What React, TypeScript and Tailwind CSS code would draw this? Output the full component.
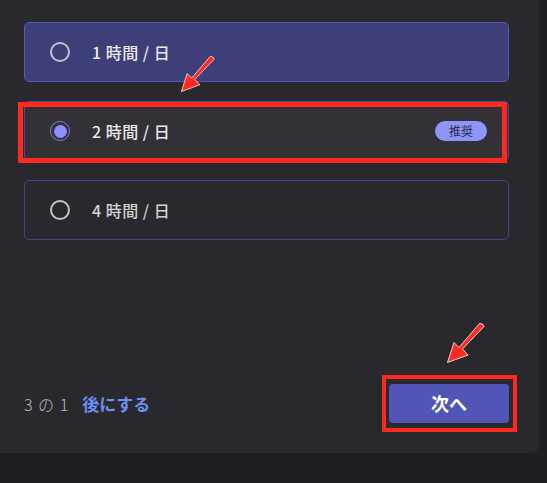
import { useState } from "react";

const options = [
  { id: 1, label: "1 時間 / 日" },
  { id: 2, label: "2 時間 / 日", badge: "推奨" },
  { id: 4, label: "4 時間 / 日" },
];

// red annotation arrow, tip at bottom-left
const Arrow = ({ className }: { className: string }) => (
  <svg viewBox="0 0 40 42" className={className}>
    <path
      d="M33.5 1.5 Q37 1 38 4.5 L16.5 27 L22 33 L1.5 40.5 L8 20.5 L13 25.5 Z"
      fill="#ff2a1f"
      stroke="#fff"
      strokeWidth="0.8"
      strokeLinejoin="round"
    />
  </svg>
);

const App = () => {
  const [selected, setSelected] = useState(2);
  return (
    <div
      className="relative w-[547px] h-[483px] bg-[#1f1e22] overflow-hidden"
      style={{ fontFamily: '"Noto Sans CJK JP", "Noto Sans", sans-serif' }}
    >
      <div className="w-[539px] h-[453px] bg-[#29282c] rounded-br-lg flex flex-col pl-6 pr-[30px] pt-[22px] pb-[30px]">
        <div className="flex flex-col gap-[19px]">
          {options.map((o, i) => {
            const isSel = selected === o.id;
            return (
              <div
                key={o.id}
                onClick={() => setSelected(o.id)}
                className={
                  "h-[60px] rounded-[5px] border flex items-center pl-[25px] pr-[21px] cursor-pointer " +
                  (i === 0
                    ? "bg-[#3e3e78] border-[#5559b0]"
                    : isSel
                    ? "bg-[#333036] border-[#4a4c9c]"
                    : "bg-transparent border-[#40418f]")
                }
              >
                {isSel ? (
                  <span className="w-[20px] h-[20px] rounded-full border-[1.5px] border-[#7d82ea] flex items-center justify-center">
                    <span className="w-[13px] h-[13px] rounded-full bg-[#8a90ff]" />
                  </span>
                ) : (
                  <span className="w-[20px] h-[20px] rounded-full border-2 border-[#c4c4c4]" />
                )}
                <span
                  className={
                    "ml-[22px] text-[16px] font-medium tracking-[0.5px] " +
                    (i === 2 ? "text-[#d2d2d2]" : "text-[#ececec]")
                  }
                >
                  {o.label}
                </span>
                {o.badge && (
                  <span className="ml-auto h-[20px] px-[14px] rounded-full bg-[#8e95f8] text-[#2b2a3e] text-[12px] leading-[20px]">
                    {o.badge}
                  </span>
                )}
              </div>
            );
          })}
        </div>

        <div className="mt-auto flex items-center justify-between">
          <div className="flex items-center gap-[13px]">
            <span className="text-[#bcbcbc] text-[16px] font-light tracking-[1px]">3 の 1</span>
            <span className="text-[#6b8ef0] text-[17px] font-bold">後にする</span>
          </div>
          <button className="w-[120px] h-[39px] rounded-[4px] bg-[#5155b5] text-white text-[18px] font-bold">
            次へ
          </button>
        </div>
      </div>

      {/* annotation overlays */}
      <div className="absolute left-[18px] top-[102px] w-[489px] h-[61px] border-[5px] border-[#ff2a1f]" />
      <div className="absolute left-[382px] top-[375px] w-[135px] h-[57px] border-[4px] border-[#ff2a1f]" />
      <Arrow className="absolute left-[180px] top-[53px] w-[36px] h-[42px]" />
      <Arrow className="absolute left-[446px] top-[322px] w-[40px] h-[42px]" />
    </div>
  );
};

export default App;
